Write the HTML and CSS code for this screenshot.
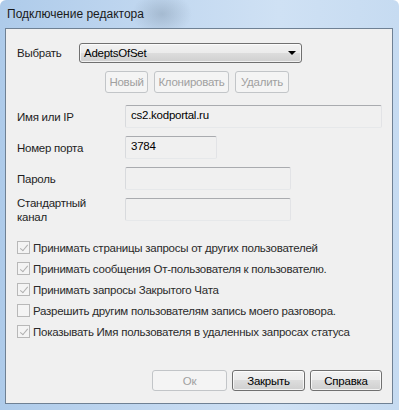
FILE: index.html
```html
<!DOCTYPE html>
<html>
<head>
  <meta charset="UTF-8" />
  <title>Подключение редактора</title>
  <link rel="stylesheet" href="styles.css">
</head>
<body>
  <div class="window">
    <div class="titlebar">Подключение редактора</div>

    <div class="client">
      <!-- Профиль -->
      <div class="select-row">
        <span class="label">Выбрать</span>
        <div class="combo">
          <span>AdeptsOfSet</span>
          <span class="combo-arrow"></span>
        </div>
      </div>

      <div class="profile-buttons">
        <button class="btn btn-new" disabled>Новый</button>
        <button class="btn btn-clone" disabled>Клонировать</button>
        <button class="btn btn-delete" disabled>Удалить</button>
      </div>

      <!-- Параметры соединения -->
      <div class="fields">
        <div class="field">
          <span class="field-label">Имя или IP</span>
          <div class="textbox textbox-long">cs2.kodportal.ru</div>
        </div>
        <div class="field">
          <span class="field-label">Номер порта</span>
          <div class="textbox textbox-short">3784</div>
        </div>
        <div class="field">
          <span class="field-label">Пароль</span>
          <div class="textbox textbox-mid"></div>
        </div>
        <div class="field">
          <span class="field-label">Стандартный<br>канал</span>
          <div class="textbox textbox-mid"></div>
        </div>
      </div>

      <!-- Опции -->
      <ul class="options">
        <li><span class="check checked"></span>Принимать страницы запросы от других пользователей</li>
        <li><span class="check checked"></span>Принимать сообщения От-пользователя к пользователю.</li>
        <li><span class="check checked"></span>Принимать запросы Закрытого Чата</li>
        <li><span class="check"></span>Разрешить другим пользователям запись моего разговора.</li>
        <li><span class="check checked"></span>Показывать Имя пользователя в удаленных запросах статуса</li>
      </ul>

      <div class="footer">
        <button class="btn btn-ok" disabled>Ок</button>
        <button class="btn btn-close">Закрыть</button>
        <button class="btn btn-help">Справка</button>
      </div>
    </div>
  </div>
</body>
</html>
```

FILE: styles.css
```css
:root {
  --face: #f0f0f0;
  --text: #1e1e1e;
  --disabled-text: #a0a0a0;
  --disabled-border: #c2c5c8;
}

html, body {
  margin: 0;
  padding: 0;
  background: #ffffff;
  overflow: hidden;
}

body {
  font-family: "Liberation Sans", Arial, sans-serif;
  font-size: 11.5px;
  letter-spacing: -0.25px;
  color: var(--text);
}

.window {
  width: 399px;
  height: 410px;
  box-sizing: border-box;
  padding: 0 6px 6px 5px;
  display: flex;
  flex-direction: column;
  border-radius: 6px 6px 0 0;
  background:
    radial-gradient(ellipse 30px 22px at 162px 14px, rgba(110, 130, 150, 0.35), rgba(110, 130, 150, 0) 100%),
    linear-gradient(to right, #aecbea 0%, #c2d8f0 40%, #cfe1f4 70%, #c6dbf1 100%);
}

.titlebar {
  height: 28px;
  line-height: 28px;
  padding-left: 2px;
  font-size: 12px;
  letter-spacing: 0;
  color: #1a1a1a;
  white-space: nowrap;
}

.client {
  flex: 1;
  display: flex;
  flex-direction: column;
  background: var(--face);
  border: 1px solid #6f8194;
  padding: 14px 10px 12px 11px;
}

/* Выбор профиля */
.select-row {
  display: flex;
  align-items: center;
  height: 20px;
}

.select-row .label {
  width: 62px;
}

.combo {
  width: 223px;
  height: 20px;
  box-sizing: border-box;
  display: flex;
  align-items: center;
  justify-content: space-between;
  padding: 0 5px 0 4px;
  border: 1px solid #707070;
  border-radius: 3px;
  background: linear-gradient(#f2f2f2 0%, #ebebeb 50%, #dddddd 50%, #cfcfcf 100%);
  box-shadow: inset 0 0 0 1px rgba(255, 255, 255, 0.7);
  color: #000;
}

.combo-arrow {
  width: 0;
  height: 0;
  border-left: 4px solid transparent;
  border-right: 4px solid transparent;
  border-top: 4px solid #000;
}

.profile-buttons {
  display: flex;
  gap: 6px;
  margin: 8px 0 0 88px;
}

/* Кнопки */
.btn {
  font-family: inherit;
  font-size: inherit;
  letter-spacing: inherit;
  height: 22px;
  padding: 0;
  box-sizing: border-box;
  border: 1px solid #707070;
  border-radius: 3px;
  background: linear-gradient(#f2f2f2 0%, #ebebeb 50%, #dddddd 50%, #cfcfcf 100%);
  box-shadow: inset 0 0 0 1px rgba(255, 255, 255, 0.75);
  color: #000;
}

.btn:disabled {
  background: #f4f4f4;
  border-color: var(--disabled-border);
  box-shadow: none;
  color: var(--disabled-text);
}

.btn-new { width: 43px; }
.btn-clone { width: 75px; }
.btn-delete { width: 54px; }

/* Поля */
.fields {
  display: flex;
  flex-direction: column;
  gap: 8px;
  margin-top: 12px;
}

.field {
  display: flex;
  align-items: center;
  height: 23px;
}

.field-label {
  width: 108px;
  flex-shrink: 0;
  line-height: 14px;
}

.textbox {
  height: 23px;
  box-sizing: border-box;
  border: 1px solid;
  border-color: #a9abaf #e2e3e6 #e6e8ea #d8dadd;
  border-radius: 2px;
  background: var(--face);
  padding: 0 5px;
  line-height: 19px;
  color: #000;
}

.textbox-long { width: 258px; }
.textbox-short { width: 92px; }
.textbox-mid { width: 166px; }

/* Опции */
.options {
  list-style: none;
  margin: 16px 0 0 0;
  padding: 0;
}

.options li {
  display: flex;
  align-items: center;
  height: 21px;
  color: #2a2a2a;
  white-space: nowrap;
}

.check {
  flex-shrink: 0;
  width: 13px;
  height: 13px;
  box-sizing: border-box;
  margin-right: 3px;
  border: 1px solid #b8b8b8;
  background: #f4f4f4;
  position: relative;
}

.check.checked::after {
  content: "";
  position: absolute;
  left: 4px;
  top: 1px;
  width: 3px;
  height: 7px;
  border: solid #b0b0b0;
  border-width: 0 1px 1px 0;
  transform: rotate(40deg);
}

.footer {
  margin-top: auto;
  display: flex;
  justify-content: flex-end;
  gap: 5px;
}

.footer .btn {
  height: 21px;
}

.btn-ok { width: 75px; }
.btn-close { width: 73px; }
.btn-help { width: 72px; }
```
